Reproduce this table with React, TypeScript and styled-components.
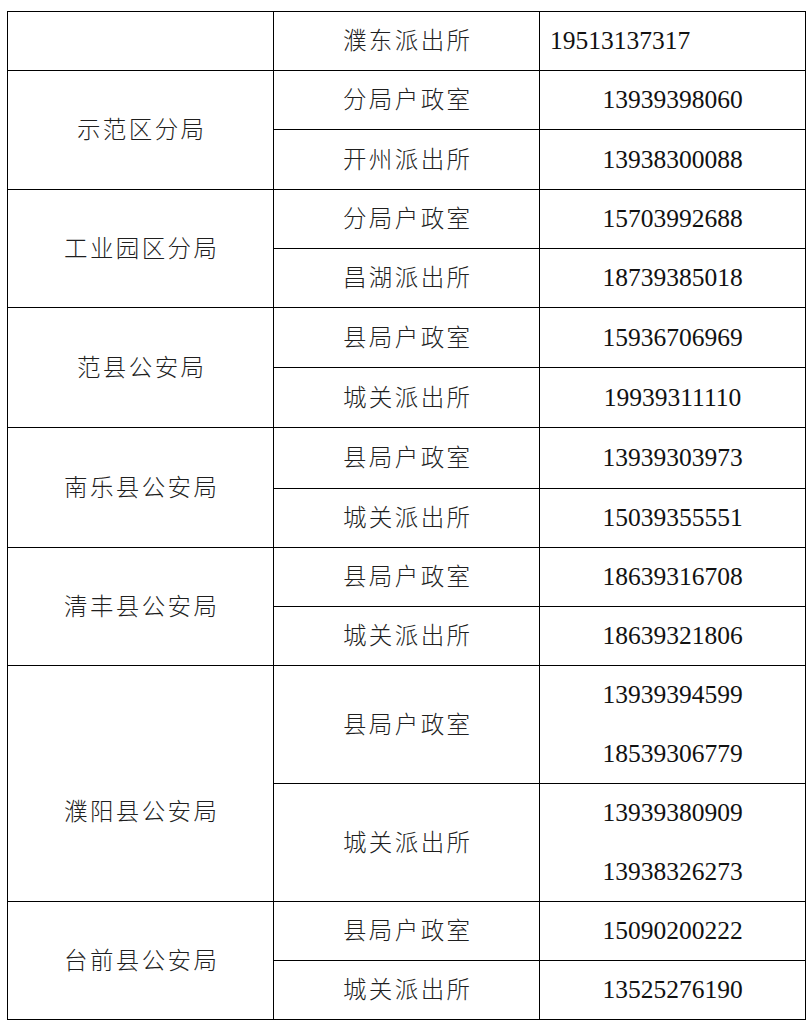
import React from "react";
import styled, { createGlobalStyle } from "styled-components";

const GlobalStyle = createGlobalStyle`
  html, body {
    margin: 0;
    padding: 0;
    background: #ffffff;
  }
  body {
    font-family: "Noto Sans CJK SC", "Noto Sans", sans-serif;
  }
`;

const Page = styled.div`
  width: 809px;
  height: 1024px;
  overflow: hidden;
  background: #fff;
  padding: 11px 0 0 7px;
  box-sizing: border-box;
`;

const Table = styled.table`
  border-collapse: collapse;
  table-layout: fixed;
  width: 798px;
  border: 1.5px solid #000;
`;

const Row = styled.tr<{ $h: number }>`
  height: ${(p) => p.$h}px;
`;

const Cell = styled.td<{ $shift?: number }>`
  border: 1px solid #000;
  padding: ${(p) => (p.$shift ? `${p.$shift}px 0 0 0` : "0")};
  vertical-align: middle;
  text-align: center;
`;

const NameText = styled.span`
  display: inline-block;
  font-family: "Noto Sans CJK SC", "Noto Sans CJK TC", sans-serif;
  font-weight: 300;
  font-size: 23.5px;
  letter-spacing: 2.4px;
  padding-left: 2.4px;
  color: #1f1f1f;
  line-height: 1;
`;

const PhoneList = styled.div<{ $align?: "left" | "center" }>`
  display: flex;
  flex-direction: column;
  align-items: ${(p) => (p.$align === "left" ? "flex-start" : "center")};
  padding-left: ${(p) => (p.$align === "left" ? "10px" : "0")};
`;

const Phone = styled.span<{ $lh: number }>`
  font-family: "Liberation Serif", "Times New Roman", serif;
  font-size: 25.5px;
  color: #111;
  line-height: ${(p) => p.$lh}px;
`;

type Sub = { office: string; phones: string[]; h: number };
type Group = { name: string; subs: Sub[]; leftAlign?: boolean; shift?: number };

const groups: Group[] = [
  { name: "", leftAlign: true, subs: [{ office: "濮东派出所", phones: ["19513137317"], h: 59 }] },
  {
    name: "示范区分局",
    subs: [
      { office: "分局户政室", phones: ["13939398060"], h: 59 },
      { office: "开州派出所", phones: ["13938300088"], h: 60 },
    ],
  },
  {
    name: "工业园区分局",
    subs: [
      { office: "分局户政室", phones: ["15703992688"], h: 59 },
      { office: "昌湖派出所", phones: ["18739385018"], h: 59 },
    ],
  },
  {
    name: "范县公安局",
    subs: [
      { office: "县局户政室", phones: ["15936706969"], h: 60 },
      { office: "城关派出所", phones: ["19939311110"], h: 60 },
    ],
  },
  {
    name: "南乐县公安局",
    subs: [
      { office: "县局户政室", phones: ["13939303973"], h: 61 },
      { office: "城关派出所", phones: ["15039355551"], h: 59 },
    ],
  },
  {
    name: "清丰县公安局",
    subs: [
      { office: "县局户政室", phones: ["18639316708"], h: 59 },
      { office: "城关派出所", phones: ["18639321806"], h: 59 },
    ],
  },
  {
    name: "濮阳县公安局",
    shift: 56,
    subs: [
      { office: "县局户政室", phones: ["13939394599", "18539306779"], h: 118 },
      { office: "城关派出所", phones: ["13939380909", "13938326273"], h: 117 },
    ],
  },
  {
    name: "台前县公安局",
    subs: [
      { office: "县局户政室", phones: ["15090200222"], h: 59 },
      { office: "城关派出所", phones: ["13525276190"], h: 59 },
    ],
  },
];

export default function App() {
  return (
    <>
      <GlobalStyle />
      <Page>
        <Table>
          <colgroup>
            <col style={{ width: 266 }} />
            <col style={{ width: 266 }} />
            <col style={{ width: 266 }} />
          </colgroup>
          <tbody>
            {groups.map((g, gi) =>
              g.subs.map((s, si) => (
                <Row key={`${gi}-${si}`} $h={s.h}>
                  {si === 0 && (
                    <Cell rowSpan={g.subs.length} $shift={g.shift}>
                      <NameText>{g.name}</NameText>
                    </Cell>
                  )}
                  <Cell>
                    <NameText>{s.office}</NameText>
                  </Cell>
                  <Cell>
                    <PhoneList $align={g.leftAlign ? "left" : "center"}>
                      {s.phones.map((p) => (
                        <Phone key={p} $lh={s.phones.length > 1 ? 58.5 : 30}>
                          {p}
                        </Phone>
                      ))}
                    </PhoneList>
                  </Cell>
                </Row>
              ))
            )}
          </tbody>
        </Table>
      </Page>
    </>
  );
}
